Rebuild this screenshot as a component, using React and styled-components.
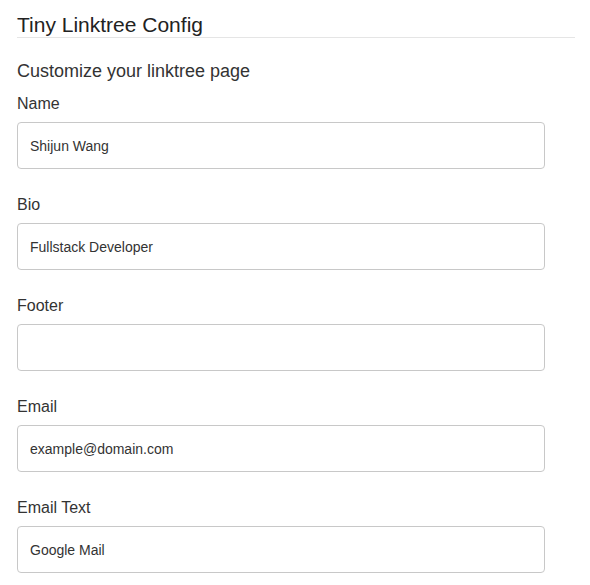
import React from "react";
import styled, { createGlobalStyle } from "styled-components";

const Global = createGlobalStyle`
  html, body { margin: 0; padding: 0; background: #fff; }
  body { font-family: "Liberation Sans", Arial, sans-serif; color: #333; }
`;

const Page = styled.div`
  padding: 13px 15px 0 17px;
`;

const Title = styled.h1`
  margin: 0;
  font-size: 21px;
  font-weight: 400;
  color: #222;
  line-height: 24px;
  border-bottom: 1px solid #e5e5e5;
`;

const Form = styled.form`
  display: flex;
  flex-direction: column;
  padding-top: 21px;
  width: 528px;
`;

const Subtitle = styled.h2`
  margin: 0 0 11px;
  font-size: 18px;
  font-weight: 400;
  color: #333;
  line-height: 24px;
`;

const Field = styled.div`
  display: flex;
  flex-direction: column;
  gap: 8px;
  margin-bottom: 26px;
`;

const Label = styled.label`
  font-size: 16px;
  line-height: 20px;
  color: #333;
`;

const Input = styled.input`
  box-sizing: border-box;
  height: 47px;
  width: 100%;
  padding: 0 12px;
  border: 1px solid #c8c8c8;
  border-radius: 4px;
  font-family: "Liberation Sans", Arial, sans-serif;
  font-size: 14px;
  color: #333;
  background: #fff;
  outline: none;
`;

const fields = [
  { id: "name", label: "Name", value: "Shijun Wang" },
  { id: "bio", label: "Bio", value: "Fullstack Developer" },
  { id: "footer", label: "Footer", value: "" },
  { id: "email", label: "Email", value: "example@domain.com" },
  { id: "emailText", label: "Email Text", value: "Google Mail" },
];

export default function App() {
  return (
    <>
      <Global />
      <Page>
        <Title>Tiny Linktree Config</Title>
        <Form onSubmit={(e) => e.preventDefault()}>
          <Subtitle>Customize your linktree page</Subtitle>
          {fields.map((f) => (
            <Field key={f.id}>
              <Label htmlFor={f.id}>{f.label}</Label>
              <Input id={f.id} defaultValue={f.value} />
            </Field>
          ))}
        </Form>
      </Page>
    </>
  );
}
